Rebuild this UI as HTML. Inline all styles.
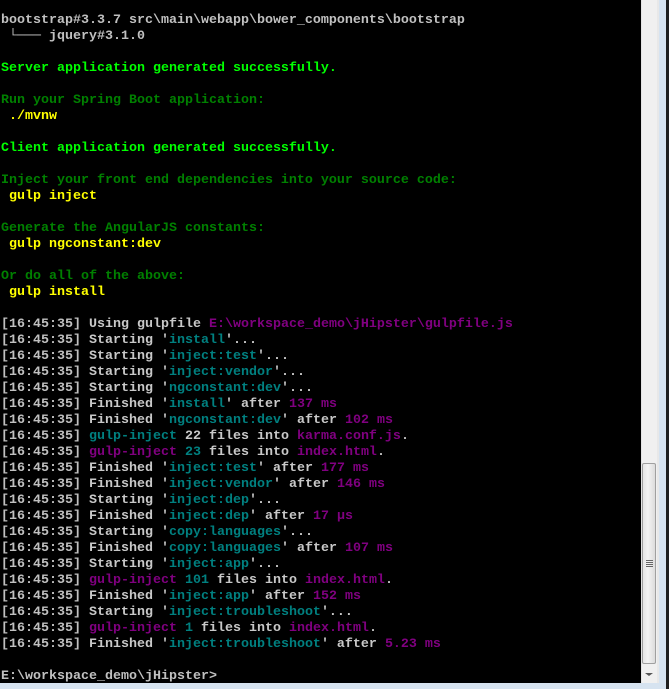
<!DOCTYPE html>
<html><head><meta charset="utf-8"><style>
html,body{margin:0;padding:0;width:669px;height:689px;overflow:hidden;background:#1e1e1e}
#con{position:absolute;left:0;top:0;width:641px;height:683px;background:#000}
pre{position:absolute;left:1px;top:13px;margin:0;font-family:"Liberation Mono",monospace;font-size:13.33px;line-height:16px;color:#c0c0c0;font-weight:bold;white-space:pre}
.g{color:#00ff00}.d{color:#008000}.y{color:#ffff00}.t{color:#008080}.p{color:#800080}.w{color:#c8c8c8}
#sb{position:absolute;left:641px;top:0;width:16px;height:683px;background:#f0f0f0;border-left:1px solid #e4e4e4}
#thumb{position:absolute;left:642px;top:463px;width:14px;height:201px;background:linear-gradient(90deg,#e6e6e6,#f4f4f4 40%,#dcdcdc);border:1px solid #a0a0a0;border-radius:2px;box-sizing:border-box}
#grip{position:absolute;left:646px;top:560px;width:7px;height:7px;background:repeating-linear-gradient(#666 0 1px,transparent 1px 2px)}
#arr{position:absolute;left:645px;top:673px;width:0;height:0;border-left:4px solid transparent;border-right:4px solid transparent;border-top:3px solid #555}
#bl{position:absolute;left:659px;top:0;width:7px;height:689px;background:#d6e3f0}
#bb{position:absolute;left:0;top:683px;width:666px;height:6px;background:#d6e3f0}
#bg{position:absolute;left:657px;top:0;width:2px;height:683px;background:#e8e8e8}
</style></head><body>
<div id="con"></div>
<pre>bootstrap#3.3.7 src\main\webapp\bower_components\bootstrap
 └─── jquery#3.1.0

<span class="g">Server application generated successfully.</span>

<span class="d">Run your Spring Boot application:</span>
<span class="y"> ./mvnw</span>

<span class="g">Client application generated successfully.</span>

<span class="d">Inject your front end dependencies into your source code:</span>
<span class="y"> gulp inject</span>

<span class="d">Generate the AngularJS constants:</span>
<span class="y"> gulp ngconstant:dev</span>

<span class="d">Or do all of the above:</span>
<span class="y"> gulp install</span>

[16:45:35] <span class="w">Using gulpfile</span> <span class="p">E:\workspace_demo\jHipster\gulpfile.js</span>
[16:45:35] <span class="w">Starting '</span><span class="t">install</span><span class="w">'...</span>
[16:45:35] <span class="w">Starting '</span><span class="t">inject:test</span><span class="w">'...</span>
[16:45:35] <span class="w">Starting '</span><span class="t">inject:vendor</span><span class="w">'...</span>
[16:45:35] <span class="w">Starting '</span><span class="t">ngconstant:dev</span><span class="w">'...</span>
[16:45:35] <span class="w">Finished '</span><span class="t">install</span><span class="w">' after</span> <span class="p">137 ms</span>
[16:45:35] <span class="w">Finished '</span><span class="t">ngconstant:dev</span><span class="w">' after</span> <span class="p">102 ms</span>
[16:45:35] <span class="t">gulp-inject</span> <span class="w">22 files into</span> <span class="p">karma.conf.js</span>.
[16:45:35] <span class="p">gulp-inject</span> <span class="t">23</span> <span class="w">files into</span> <span class="p">index.html</span>.
[16:45:35] <span class="w">Finished '</span><span class="t">inject:test</span><span class="w">' after</span> <span class="p">177 ms</span>
[16:45:35] <span class="w">Finished '</span><span class="t">inject:vendor</span><span class="w">' after</span> <span class="p">146 ms</span>
[16:45:35] <span class="w">Starting '</span><span class="t">inject:dep</span><span class="w">'...</span>
[16:45:35] <span class="w">Finished '</span><span class="t">inject:dep</span><span class="w">' after</span> <span class="p">17 μs</span>
[16:45:35] <span class="w">Starting '</span><span class="t">copy:languages</span><span class="w">'...</span>
[16:45:35] <span class="w">Finished '</span><span class="t">copy:languages</span><span class="w">' after</span> <span class="p">107 ms</span>
[16:45:35] <span class="w">Starting '</span><span class="t">inject:app</span><span class="w">'...</span>
[16:45:35] <span class="p">gulp-inject</span> <span class="t">101</span> <span class="w">files into</span> <span class="p">index.html</span>.
[16:45:35] <span class="w">Finished '</span><span class="t">inject:app</span><span class="w">' after</span> <span class="p">152 ms</span>
[16:45:35] <span class="w">Starting '</span><span class="t">inject:troubleshoot</span><span class="w">'...</span>
[16:45:35] <span class="p">gulp-inject</span> <span class="t">1</span> <span class="w">files into</span> <span class="p">index.html</span>.
[16:45:35] <span class="w">Finished '</span><span class="t">inject:troubleshoot</span><span class="w">' after</span> <span class="p">5.23 ms</span>

E:\workspace_demo\jHipster&gt;</pre>
<div id="sb"></div><div id="bg"></div>
<div id="thumb"></div><div id="grip"></div><div id="arr"></div>
<div id="bl"></div><div id="bb"></div>
</body></html>
